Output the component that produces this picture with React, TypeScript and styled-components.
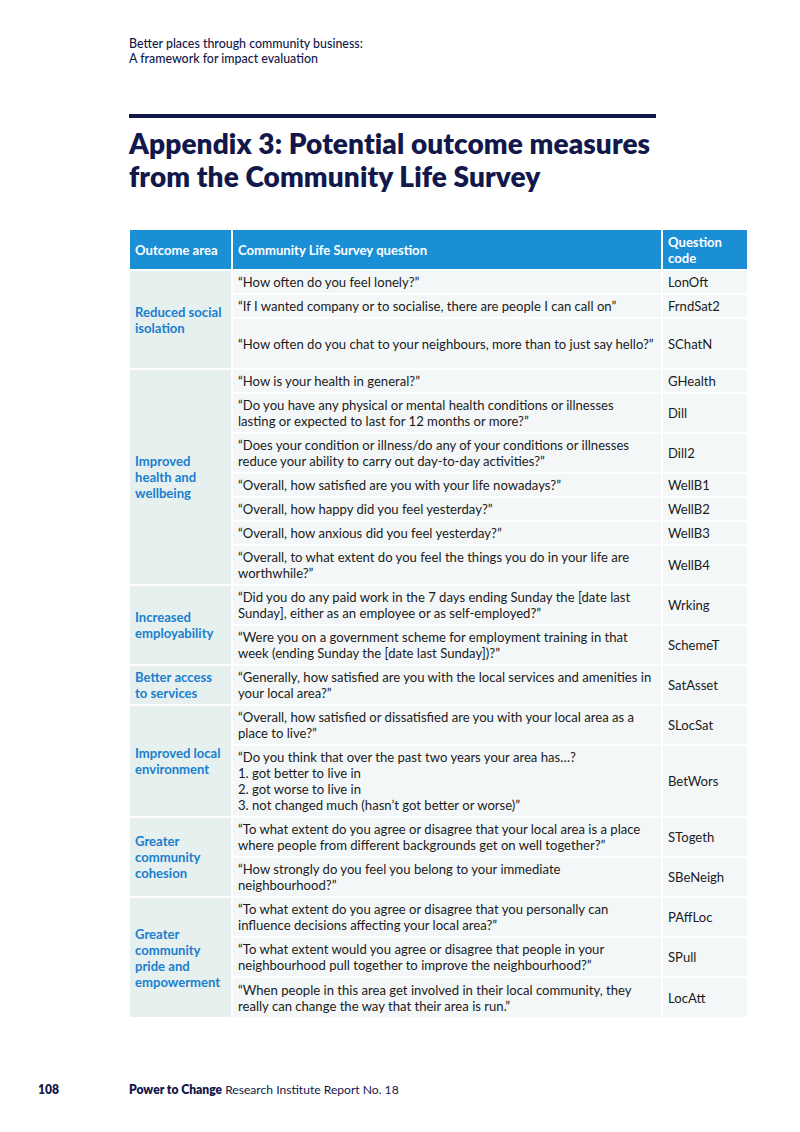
import React from "react";
import styled, { createGlobalStyle } from "styled-components";

const Global = createGlobalStyle`
  html, body { margin: 0; padding: 0; background: #ffffff; }
  body { font-family: Lato, "Noto Sans", sans-serif; color: #1b1b1b; }
`;

const Page = styled.div`
  width: 800px;
  height: 1132px;
  position: relative;
  box-sizing: border-box;
  padding: 36px 0 0 129px;
  display: flex;
  flex-direction: column;
`;

const RunningHead = styled.div`
  font-size: 12.4px;
  line-height: 15px;
  color: #12184a;
  font-weight: 500;
`;

const Rule = styled.div`
  width: 527px;
  height: 4px;
  background: #12184a;
  margin-top: 48px;
`;

const Title = styled.h1`
  margin: 9px 0 0 0;
  font-size: 28px;
  line-height: 33px;
  font-weight: 800;
  color: #12184a;
  letter-spacing: 0.1px;
`;

const Table = styled.table`
  margin-top: 37px;
  width: 619px;
  margin-left: -1px;
  border-collapse: collapse;
  table-layout: fixed;
  font-size: 13.1px;
  line-height: 16px;
`;

const HeadCell = styled.th`
  background: #1b8fd6;
  color: #ffffff;
  font-weight: 700;
  text-align: left;
  vertical-align: middle;
  padding: 0 5px;
  border: 2px solid #ffffff;
  border-top: none;
  height: 40px;
  box-sizing: border-box;
`;

const Row = styled.tr<{ $h: number }>`
  height: ${(p) => p.$h}px;
`;

const AreaCell = styled.td`
  background: #e6f0ee;
  color: #1a7fcf;
  font-weight: 700;
  padding: 0 4px 0 5px;
  vertical-align: middle;
  border: 2px solid #ffffff;
`;

const QCell = styled.td<{ $nowrap?: boolean }>`
  background: #f3f7f8;
  padding: 0 4px 0 5px;
  vertical-align: middle;
  border: 2px solid #ffffff;
  white-space: ${(p) => (p.$nowrap ? "nowrap" : "normal")};
`;

const CodeCell = styled.td`
  background: #f3f7f8;
  padding: 0 5px;
  vertical-align: middle;
  border: 2px solid #ffffff;
`;

const Footer = styled.div`
  position: absolute;
  left: 0;
  top: 1082px;
  display: flex;
  font-size: 12.1px;
  color: #12184a;
`;

const PageNum = styled.span`
  width: 129px;
  box-sizing: border-box;
  padding-left: 38px;
  font-weight: 800;
`;

const Strong = styled.b`
  font-weight: 800;
`;

type Q = { q: React.ReactNode; code: string; h: number; nowrap?: boolean };
type Group = { area: string; rows: Q[] };

const groups: Group[] = [
  {
    area: "Reduced social isolation",
    rows: [
      { q: "“How often do you feel lonely?”", code: "LonOft", h: 24 },
      { q: "“If I wanted company or to socialise, there are people I can call on”", code: "FrndSat2", h: 24, nowrap: true },
      { q: "“How often do you chat to your neighbours, more than to just say hello?”", code: "SChatN", h: 51, nowrap: true },
    ],
  },
  {
    area: "Improved health and wellbeing",
    rows: [
      { q: "“How is your health in general?”", code: "GHealth", h: 24 },
      {
        q: (
          <>
            “Do you have any physical or mental health conditions or illnesses
            <br />
            lasting or expected to last for 12 months or more?”
          </>
        ),
        code: "Dill",
        h: 40,
      },
      { q: "“Does your condition or illness/do any of your conditions or illnesses reduce your ability to carry out day-to-day activities?”", code: "Dill2", h: 40 },
      { q: "“Overall, how satisfied are you with your life nowadays?”", code: "WellB1", h: 24 },
      { q: "“Overall, how happy did you feel yesterday?”", code: "WellB2", h: 24 },
      { q: "“Overall, how anxious did you feel yesterday?”", code: "WellB3", h: 24 },
      { q: "“Overall, to what extent do you feel the things you do in your life are worthwhile?”", code: "WellB4", h: 40 },
    ],
  },
  {
    area: "Increased employability",
    rows: [
      { q: "“Did you do any paid work in the 7 days ending Sunday the [date last Sunday], either as an employee or as self-employed?”", code: "Wrking", h: 40 },
      { q: "“Were you on a government scheme for employment training in that week (ending Sunday the [date last Sunday])?”", code: "SchemeT", h: 40 },
    ],
  },
  {
    area: "Better access to services",
    rows: [
      { q: "“Generally, how satisfied are you with the local services and amenities in your local area?”", code: "SatAsset", h: 40 },
    ],
  },
  {
    area: "Improved local environment",
    rows: [
      { q: "“Overall, how satisfied or dissatisfied are you with your local area as a place to live?”", code: "SLocSat", h: 40 },
      {
        q: (
          <>
            “Do you think that over the past two years your area has…?
            <br />1. got better to live in
            <br />2. got worse to live in
            <br />3. not changed much (hasn’t got better or worse)”
          </>
        ),
        code: "BetWors",
        h: 72,
      },
    ],
  },
  {
    area: "Greater community cohesion",
    rows: [
      { q: "“To what extent do you agree or disagree that your local area is a place where people from different backgrounds get on well together?”", code: "STogeth", h: 40 },
      { q: "“How strongly do you feel you belong to your immediate neighbourhood?”", code: "SBeNeigh", h: 40 },
    ],
  },
  {
    area: "Greater community pride and empowerment",
    rows: [
      { q: "“To what extent do you agree or disagree that you personally can influence decisions affecting your local area?”", code: "PAffLoc", h: 40 },
      { q: "“To what extent would you agree or disagree that people in your neighbourhood pull together to improve the neighbourhood?”", code: "SPull", h: 40 },
      { q: "“When people in this area get involved in their local community, they really can change the way that their area is run.”", code: "LocAtt", h: 41 },
    ],
  },
];

export default function App() {
  return (
    <>
      <Global />
      <Page>
        <RunningHead>
          Better places through community business:
          <br />
          A framework for impact evaluation
        </RunningHead>
        <Rule />
        <Title>
          Appendix 3: Potential outcome measures
          <br />
          from the Community Life Survey
        </Title>
        <Table>
          <colgroup>
            <col style={{ width: 103 }} />
            <col style={{ width: 430 }} />
            <col style={{ width: 86 }} />
          </colgroup>
          <thead>
            <tr>
              <HeadCell>Outcome area</HeadCell>
              <HeadCell>Community Life Survey question</HeadCell>
              <HeadCell>Question code</HeadCell>
            </tr>
          </thead>
          <tbody>
            {groups.map((g) =>
              g.rows.map((r, i) => (
                <Row key={g.area + r.code} $h={r.h}>
                  {i === 0 && <AreaCell rowSpan={g.rows.length}>{g.area}</AreaCell>}
                  <QCell $nowrap={r.nowrap}>{r.q}</QCell>
                  <CodeCell>{r.code}</CodeCell>
                </Row>
              ))
            )}
          </tbody>
        </Table>
        <Footer>
          <PageNum>108</PageNum>
          <span>
            <Strong>Power to Change</Strong> Research Institute Report No. 18
          </span>
        </Footer>
      </Page>
    </>
  );
}
